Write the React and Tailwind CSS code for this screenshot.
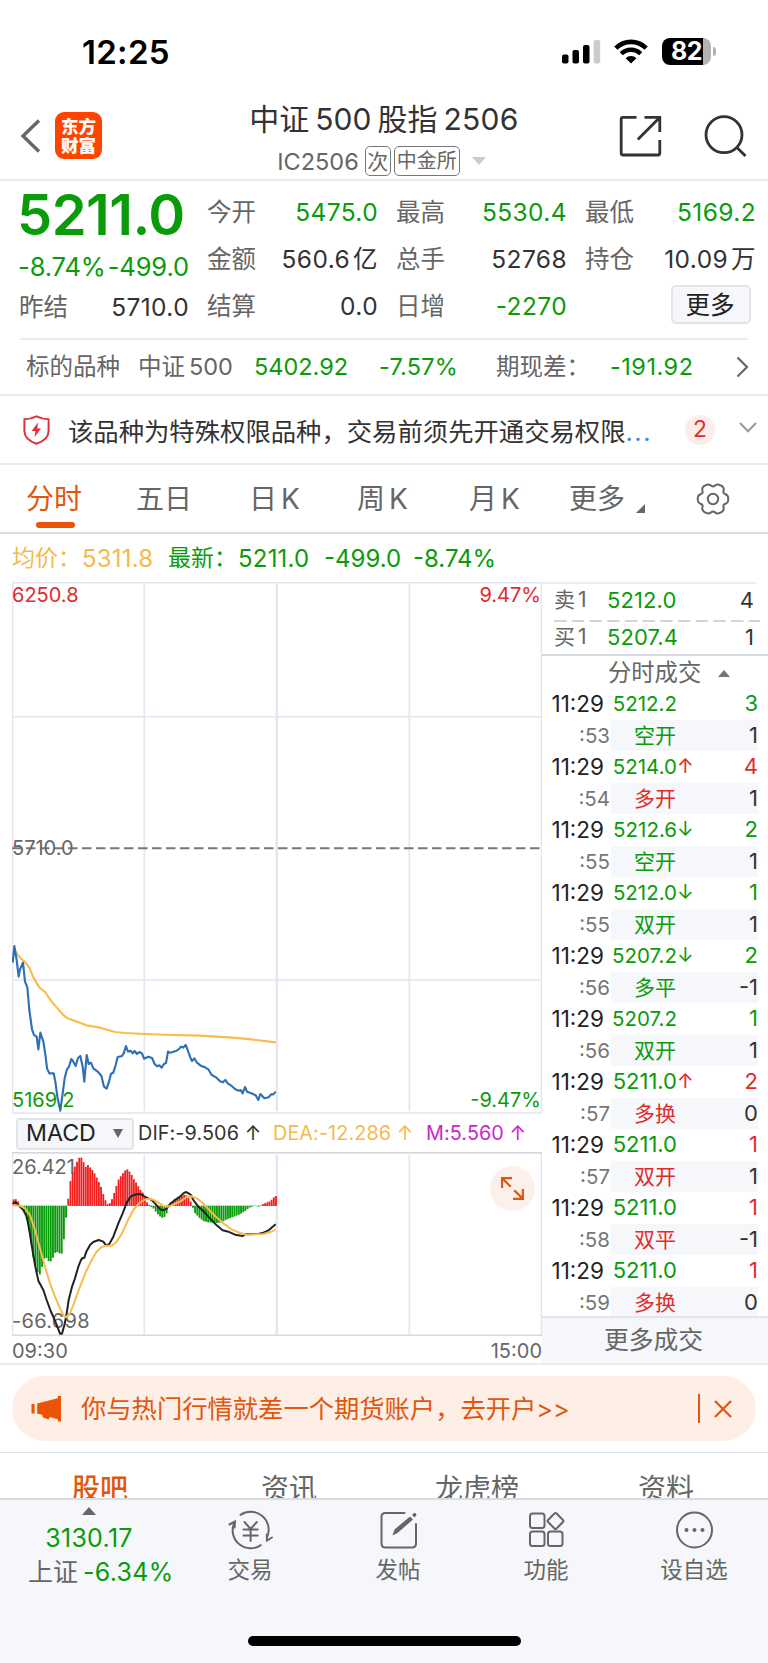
import React from 'react';

// Time & price line of the session, in chart units (3 per pixel)
const PRICE_POINTS =
  '38,188 43,138 50,180 56,230 60,208 69,188 75,245 82,262 88,330 96,388 102,405 110,410 115,448 121,398 130,425 137,470 141,505 148,520 161,520 166,545 172,590 181,632 188,580 194,535 201,508 207,500 214,477 220,485 227,498 234,474 241,468 248,500 253,545 260,465 266,492 273,488 280,505 292,514 304,527 312,560 320,566 327,545 333,521 340,518 347,495 353,471 366,468 372,458 378,438 384,455 392,452 398,460 404,453 411,462 418,456 426,460 432,476 445,470 456,474 464,492 471,499 478,496 485,503 492,492 498,489 504,455 511,458 530,452 537,447 543,440 549,443 557,435 563,450 570,470 576,483 583,475 590,487 602,497 615,502 625,508 635,525 648,532 660,544 668,547 676,540 684,551 694,557 706,568 716,572 722,570 728,580 735,561 741,575 754,580 767,586 775,600 781,582 793,595 806,592 813,583 820,583 827,575';
const AVERAGE_POINTS =
  '43,145 50,160 60,173 75,186 88,203 100,232 118,262 135,276 155,305 175,328 192,347 203,355 225,363 260,376 300,383 345,396 375,399 434,402 520,405 600,407 700,413 760,419 827,427';
const DIF_POINTS =
  '38,312 46,306 52,312 58,318 70,330 80,350 88,390 95,435 105,495 115,542 130,570 140,600 152,633 162,655 172,680 180,701 186,701 194,672 200,640 206,600 216,560 225,535 235,500 243,480 248,474 253,473 259,455 270,435 280,426 296,420 310,425 318,436 328,432 340,410 355,370 368,340 380,308 392,290 404,284 418,282 428,285 434,290 445,295 455,300 465,310 478,325 485,330 493,330 500,326 510,312 522,302 540,290 550,280 557,276 566,280 573,285 580,300 595,320 610,333 630,355 650,376 668,391 685,395 705,404 728,408 735,403 775,402 790,398 806,391 818,380 827,373';
const DEA_POINTS =
  '38,316 60,317 75,325 90,345 105,390 120,445 135,500 150,550 165,590 180,625 190,645 198,652 210,640 222,610 240,560 258,515 275,480 290,455 305,441 318,437 335,437 350,425 365,402 385,358 400,330 415,312 428,302 445,296 460,299 475,308 490,318 505,320 520,314 540,305 560,291 575,289 590,295 605,306 620,322 645,348 670,370 695,388 720,399 740,404 790,402 810,397 827,389';

// Outline of the MACD histogram, one bar is drawn per minute
const ZERO = 317;
const HISTOGRAM = [
  [38, 300], [45, 296], [52, 300], [58, 312], [62, 317], [70, 325], [78, 345], [85, 380], [92, 420], [98, 460],
  [104, 490], [111, 510], [118, 528], [122, 515], [127, 497], [132, 475], [140, 473], [148, 485], [155, 482],
  [162, 465], [168, 453], [175, 457], [185, 462], [190, 430], [195, 395], [199, 345], [203, 317], [208, 265],
  [214, 228], [220, 210], [230, 188], [238, 173], [248, 173], [255, 205], [262, 193], [275, 207], [285, 222],
  [294, 240], [304, 262], [311, 285], [318, 305], [324, 313], [332, 308], [340, 288], [348, 262], [355, 240],
  [365, 225], [375, 212], [382, 208], [392, 218], [400, 235], [410, 250], [420, 268], [430, 280], [437, 300],
  [443, 310], [450, 317], [462, 325], [470, 338], [480, 348], [488, 353], [497, 348], [505, 325], [512, 308],
  [525, 300], [540, 292], [555, 283], [563, 288], [570, 300], [575, 310], [578, 320], [585, 338], [598, 352],
  [610, 362], [625, 366], [650, 368], [665, 366], [680, 357], [700, 350], [715, 344], [735, 333], [748, 322],
  [765, 316], [778, 320], [785, 314], [800, 308], [812, 303], [820, 293], [832, 286],
];

const levelAt = (x) => {
  const i = HISTOGRAM.findIndex((p) => p[0] >= x);
  if (i <= 0) return HISTOGRAM[0][1];
  const [x0, y0] = HISTOGRAM[i - 1];
  const [x1, y1] = HISTOGRAM[i];
  return y0 + ((y1 - y0) * (x - x0)) / (x1 - x0);
};

const bars = Array.from({ length: 121 }, (_, i) => {
  const x = 38 + i * 6.56;
  return { x, y: levelAt(x + 3) };
});

const GREEN = 'text-[#0a9b0a]';
const RED = 'text-[#e12b2b]';

const trades = [
  { price: '5212.2', sec: '53', type: '空开', vol: 3, diff: 1, up: false },
  { price: '5214.0', arrow: '↑', sec: '54', type: '多开', vol: 4, diff: 1, up: true },
  { price: '5212.6', arrow: '↓', sec: '55', type: '空开', vol: 2, diff: 1, up: false },
  { price: '5212.0', arrow: '↓', sec: '55', type: '双开', vol: 1, diff: 1, up: false },
  { price: '5207.2', arrow: '↓', sec: '56', type: '多平', vol: 2, diff: -1, up: false },
  { price: '5207.2', sec: '56', type: '双开', vol: 1, diff: 1, up: false },
  { price: '5211.0', arrow: '↑', sec: '57', type: '多换', vol: 2, diff: 0, up: true },
  { price: '5211.0', sec: '57', type: '双开', vol: 1, diff: 1, up: true },
  { price: '5211.0', sec: '58', type: '双平', vol: 1, diff: -1, up: true },
  { price: '5211.0', sec: '59', type: '多换', vol: 1, diff: 0, up: true },
];

function StatusBar() {
  return (
    <div className="flex h-[84px] items-start justify-between pr-[52px] pl-[82px] text-black">
      <span className="mt-[36px] text-[33px] leading-8 font-semibold tracking-[0.3px]">12:25</span>
      <div className="mt-[38px] flex items-center">
        <svg width="39" height="25" viewBox="0 0 39 25">
          <rect x="0" y="15.5" width="6.5" height="9" rx="2" />
          <rect x="10.5" y="11" width="6.5" height="13.5" rx="2" />
          <rect x="21" y="6" width="6.5" height="18.5" rx="2" />
          <rect x="31.7" y="1" width="6.5" height="23.5" rx="2" fill="#cccccc" />
        </svg>
        <svg className="ml-[13px]" width="34" height="25" viewBox="0 0 34 25" fill="none" stroke="#000">
          <path d="M1.8 9.2 A21.5 21.5 0 0 1 32.2 9.2" strokeWidth="4.6" />
          <path d="M7.3 14.7 A13.8 13.8 0 0 1 26.7 14.7" strokeWidth="4.4" />
          <path d="M17 24.5 L11.6 19.2 A7.6 7.6 0 0 1 22.4 19.2 Z" fill="#000" stroke="none" />
        </svg>
        <div className="ml-[14px] flex h-[27px] w-[49px] items-center justify-center rounded-[8px] bg-linear-to-r from-black from-83% to-[#b3b3b3] to-83% text-[25px] leading-none font-bold tracking-[-0.6px] text-white">
          82
        </div>
        <div className="ml-[2px] h-[9px] w-[3px] rounded-r-full bg-[#b3b3b3]" />
      </div>
    </div>
  );
}

function Header() {
  return (
    <header className="flex h-[97px] items-start border-b-2 border-[#ececee] pl-[20px]">
      <svg className="mt-[35px]" width="21" height="34" viewBox="0 0 21 34" fill="none" stroke="#666" strokeWidth="3.4">
        <path d="M19 1.5 L3 17 L19 32.5" />
      </svg>
      <div className="mt-[28px] ml-[14px] flex size-[47px] flex-col items-center justify-center rounded-[9px] bg-[#ff4400] text-[17.5px] leading-[19px] font-black text-white">
        <span>东方</span>
        <span>财富</span>
      </div>
      <div className="ml-[128px] flex w-[308px] flex-col items-center">
        <h1 className="mt-[16px] flex gap-[6px] text-[30px] leading-[38px] whitespace-nowrap text-[#333]">
          <span>中证</span>
          <span>500</span>
          <span>股指</span>
          <span className="tracking-[0.3px]">2506</span>
        </h1>
        <div className="mt-[8px] flex items-center pr-[5px] text-[24px] leading-[29px] text-[#666]">
          <span className="text-[23.5px]">IC2506</span>
          <span className="ml-[6px] flex h-[30px] w-[26px] items-center justify-center rounded-[5px] border border-[#777] text-[21px]">次</span>
          <span className="ml-[3px] flex h-[30px] w-[66px] items-center justify-center rounded-[5px] border border-[#777] text-[20px]">中金所</span>
          <svg className="ml-[12px]" width="14" height="8" viewBox="0 0 14 8">
            <path d="M0 0 H14 L7 8 Z" fill="#cbcbcb" />
          </svg>
        </div>
      </div>
      <svg className="mt-[31px] ml-[81px]" width="43" height="43" viewBox="0 0 43 43" fill="none" stroke="#333" strokeWidth="2.8">
        <path d="M17.5 2.4 H4 Q2.2 2.4 2.2 4.2 V38 Q2.2 40 4.2 40 H39 Q40.8 40 40.8 38 V25" />
        <path d="M25.5 2.4 H40.8 V17 M40.2 3 L18.8 24.6" />
      </svg>
      <svg className="mt-[31px] ml-[42px]" width="43" height="43" viewBox="0 0 43 43" fill="none" stroke="#333" strokeWidth="2.8">
        <circle cx="20" cy="19.7" r="18" />
        <path d="M32.4 32 L41.5 41" />
      </svg>
    </header>
  );
}

function Stat({ label, value, unit, color = 'text-[#333]' }) {
  return (
    <div className="flex items-center justify-between whitespace-nowrap">
      <span className="text-[#666]">{label}</span>
      <span className={`flex gap-[3px] tracking-[0.4px] ${color}`}>
        {value}
        {unit && <span>{unit}</span>}
      </span>
    </div>
  );
}

function Quote() {
  return (
    <section className="flex h-[157px] pl-[19px] text-[24.5px] leading-[47px]">
      <div className="w-[170px]">
        <div className={`-ml-[2px] mt-[5px] h-[59px] text-[56px] leading-[59px] font-semibold tracking-[-0.5px] whitespace-nowrap ${GREEN}`}>5211.0</div>
        <div className={`-ml-[1px] flex h-[39px] justify-between text-[25.5px] leading-[43px] tracking-[-0.1px] whitespace-nowrap ${GREEN}`}>
          <span>-8.74%</span>
          <span>-499.0</span>
        </div>
        <Stat label="昨结" value="5710.0" />
      </div>
      <div className="mt-[8px] ml-[18px] w-[171px]">
        <Stat label="今开" value="5475.0" color={GREEN} />
        <Stat label="金额" value="560.6" unit="亿" />
        <Stat label="结算" value="0.0" />
      </div>
      <div className="mt-[8px] ml-[18px] w-[171px]">
        <Stat label="最高" value="5530.4" color={GREEN} />
        <Stat label="总手" value="52768" />
        <Stat label="日增" value="-2270" color={GREEN} />
      </div>
      <div className="mt-[8px] ml-[18px] w-[171px]">
        <Stat label="最低" value="5169.2" color={GREEN} />
        <Stat label="持仓" value="10.09" unit="万" />
        <button className="mt-[2px] ml-[86px] flex h-[39px] w-[80px] items-center justify-center rounded-[5px] border-2 border-[#e2e4e9] bg-[#f6f7fa] pt-[2px] pr-[2px] leading-none text-[#222]">
          更多
        </button>
      </div>
    </section>
  );
}

function Underlying() {
  return (
    <section className="border-b-2 border-[#ececee]">
      <div className="mr-[20px] ml-[20px] border-t-2 border-[#ececee]" />
      <div className="flex h-[54px] items-center pl-[26px] text-[23.5px] whitespace-nowrap text-[#666]">
        <span className="w-[112px]">标的品种</span>
        <span className="flex w-[116px] gap-[4px]">
          <span>中证</span>
          <span>500</span>
        </span>
        <span className={`w-[125px] ${GREEN}`}>5402.92</span>
        <span className={`w-[117px] tracking-[0.2px] ${GREEN}`}>-7.57%</span>
        <span className="w-[114px]">期现差：</span>
        <span className={`w-[126px] tracking-[0.5px] ${GREEN}`}>-191.92</span>
        <svg width="13" height="22" viewBox="0 0 13 22" fill="none" stroke="#666" strokeWidth="2.2">
          <path d="M1.5 1.5 L11 11 L1.5 20.5" />
        </svg>
      </div>
    </section>
  );
}

function Notice() {
  return (
    <section className="flex h-[69px] items-center border-b-2 border-[#ececee] pl-[23px]">
      <svg width="27" height="30" viewBox="0 0 27 30" fill="none" stroke="#e03038" strokeWidth="2">
        <path d="M13.5 1.3 Q19 4 25.6 4.2 V16 C25.6 22 20 26.5 13.5 28.7 C7 26.5 1.4 22 1.4 16 V4.2 Q8 4 13.5 1.3 Z" strokeLinejoin="round" />
        <path d="M15 7.5 L8.6 16 H12.3 L11.6 22 L18 13.4 H14.3 Z" fill="#e03038" stroke="none" />
      </svg>
      <div className="mt-[6px] ml-[18px] flex w-[604px] text-[25.35px] whitespace-nowrap text-[#333]">
        该品种为特殊权限品种，交易前须先开通交易权限
        <span className="tracking-[1.5px] text-[#3b86d8]">...</span>
      </div>
      <span className="ml-[13px] flex size-[30px] items-center justify-center rounded-full bg-[#fdecec] text-[23px] leading-none text-[#e12b2b]">2</span>
      <svg className="mt-[-5px] ml-[24px]" width="18" height="11" viewBox="0 0 18 11" fill="none" stroke="#999" strokeWidth="2">
        <path d="M1 1 L9 9.3 L17 1" />
      </svg>
    </section>
  );
}

function PeriodTabs() {
  return (
    <nav className="flex h-[69px] items-center border-b-2 border-[#dadce1] pl-[26px] text-[28px] whitespace-nowrap text-[#666]">
      <div className="relative w-[110px] text-[#e2560e]">
        分时
        <span className="absolute top-[44px] left-[10px] h-[6px] w-[39px] rounded-full bg-[#ea5404]" />
      </div>
      <span className="w-[113px]">五日</span>
      <span className="flex w-[108px] gap-[4px]">日<span>K</span></span>
      <span className="flex w-[112px] gap-[4px]">周<span>K</span></span>
      <span className="flex w-[100px] gap-[4px]">月<span>K</span></span>
      <span>更多</span>
      <svg className="mt-[20px] ml-[11px]" width="9" height="9" viewBox="0 0 9 9">
        <path d="M9 0 V9 H0 Z" fill="#666" />
      </svg>
      <svg className="ml-[51px]" width="34" height="34" viewBox="0 0 34 34" fill="none" stroke="#666" strokeWidth="2" strokeLinejoin="round">
        <path d="M17 4.6 C18.6 4.6 19.8 2.2 22 2.6 C24 3 27 4.8 27.6 6.4 C28.3 8.3 26.8 9.4 27.6 11 C28.4 12.4 31 12.2 31.8 14.2 C32.4 16 32.4 18 31.8 19.8 C31 21.8 28.4 21.6 27.6 23 C26.8 24.6 28.3 25.7 27.6 27.6 C27 29.2 24 31 22 31.4 C19.8 31.8 18.6 29.4 17 29.4 C15.4 29.4 14.2 31.8 12 31.4 C10 31 7 29.2 6.4 27.6 C5.7 25.7 7.2 24.6 6.4 23 C5.6 21.6 3 21.8 2.2 19.8 C1.6 18 1.6 16 2.2 14.2 C3 12.2 5.6 12.4 6.4 11 C7.2 9.4 5.7 8.3 6.4 6.4 C7 4.8 10 3 12 2.6 C14.2 2.2 15.4 4.6 17 4.6 Z" />
        <circle cx="17" cy="17" r="5.2" />
      </svg>
    </nav>
  );
}

function PriceChart() {
  return (
    <div className="relative h-[532px] text-[20px] leading-none">
      <svg width="530" height="532" viewBox="0 0 530 532" fill="none">
        <g stroke="#e4e5ef" strokeWidth="1.6">
          <path d="M0 .8 H530 M.6 0 V531 M529.4 0 V531 M0 531 H530" />
          <path d="M132.3 2 V529 M397.3 2 V529 M0 134.7 H530 M0 398 H530" />
          <path d="M264.8 2 V529" strokeWidth="2.4" />
        </g>
        <path d="M0 266.3 H528" stroke="#777" strokeWidth="2" strokeDasharray="9.5 4.5" />
        <g transform="translate(-12 318) scale(.33333)" strokeLinejoin="round">
          <polyline points={AVERAGE_POINTS} stroke="#f8bc4e" strokeWidth="6.4" />
          <polyline points={PRICE_POINTS} stroke="#2f6fb7" strokeWidth="6.4" />
        </g>
      </svg>
      <span className={`absolute top-[3px] left-0 ${RED}`}>6250.8</span>
      <span className={`absolute top-[3px] right-[1px] ${RED}`}>9.47%</span>
      <span className="absolute top-[256px] left-0 text-[#666]">5710.0</span>
      <span className={`absolute bottom-[4px] left-0 ${GREEN}`}>5169.2</span>
      <span className={`absolute right-[1px] bottom-[4px] ${GREEN}`}>-9.47%</span>
    </div>
  );
}

function MacdBar() {
  return (
    <div className="flex h-[38px] items-center pt-px pl-[4px] text-[19.8px] whitespace-nowrap text-[#333]">
      <button className="flex h-[32px] w-[118px] items-center rounded-[4px] border-2 border-[#e2e4e9] bg-[#f6f7fa] pl-[8px] text-[23.2px] text-[#222]">
        MACD
        <svg className="ml-[17px]" width="10" height="9" viewBox="0 0 10 9">
          <path d="M0 0 H10 L5 9 Z" fill="#666" />
        </svg>
      </button>
      <span className="ml-[4px] w-[135px] tracking-[0.1px]">DIF:-9.506 ↑</span>
      <span className="w-[153px] tracking-[0.1px] text-[#f5b94d]">DEA:-12.286 ↑</span>
      <span className="tracking-[0.1px] text-[#c928c9]">M:5.560 ↑</span>
    </div>
  );
}

function MacdChart() {
  return (
    <div className="relative h-[184px] text-[20px] leading-none text-[#666]">
      <svg width="530" height="184" viewBox="0 0 530 184" fill="none">
        <g stroke="#e4e5ef" strokeWidth="1.6">
          <path d="M.6 0 V183 M529.4 0 V183 M132.3 3 V183 M397.3 3 V183" />
          <path d="M264.8 3 V183" strokeWidth="2.4" />
          <path d="M0 .9 H530 M0 183.2 H530" stroke="#d7d9e2" />
        </g>
        <g transform="translate(-12 -52) scale(.33333)">
          {bars.map((bar) => (
            <rect
              key={bar.x}
              x={bar.x}
              y={Math.min(bar.y, ZERO)}
              width="5.6"
              height={Math.abs(bar.y - ZERO) + 1}
              fill={bar.y < ZERO ? '#f21f1f' : '#0a9b0a'}
            />
          ))}
        </g>
      </svg>
      <span className="absolute top-[5px] left-0">26.421</span>
      <span className="absolute bottom-[5px] left-0 tracking-[0.3px]">-66.698</span>
      <svg className="absolute inset-0" width="530" height="184" viewBox="0 0 530 184" fill="none">
        <g transform="translate(-12 -52) scale(.33333)" strokeWidth="6" strokeLinejoin="round">
          <polyline points={DIF_POINTS} stroke="#222" />
          <polyline points={DEA_POINTS} stroke="#f8bc4e" />
        </g>
      </svg>
      <div className="absolute top-[14px] right-[7px] flex size-[45px] items-center justify-center rounded-full bg-[#fdf0ea]">
        <svg width="23" height="23" viewBox="0 0 23 23" fill="none" stroke="#e2560e" strokeWidth="2.2">
          <path d="M1.1 11 V1.2 H11 M1.6 1.6 L9.8 9.8" />
          <path d="M21.9 12 V21.8 H12 M21.4 21.4 L13.2 13.2" />
        </svg>
      </div>
    </div>
  );
}

function OrderRow({ label, price, volume }) {
  return (
    <div className="flex h-[36px] items-center text-[22px] whitespace-nowrap">
      <span className="flex w-[53px] gap-[3px] text-[21px] text-[#666]">
        {label}<span className="leading-[31px]">1</span>
      </span>
      <span className={`tracking-[0.1px] ${GREEN}`}>{price}</span>
      <span className="ml-auto pr-[14px] text-[#333]">{volume}</span>
    </div>
  );
}

function TradePanel() {
  return (
    <aside className="flex w-[226px] flex-col">
      <div className="h-[74px] border-b-2 border-[#d7d9e2] pl-[12px]">
        <div className="-ml-[12px] mr-[12px] border-t-2 border-[#ececf1]" />
        <div className="-mt-[2px]">
          <OrderRow label="卖" price="5212.0" volume={4} />
        </div>
        <svg className="mt-[2px]" width="206" height="2" viewBox="0 0 206 2">
          <path d="M0 1 H206" stroke="#d3d5dc" strokeWidth="2" strokeDasharray="12.5 5.2" />
        </svg>
        <div className="-mt-[3px]">
          <OrderRow label="买" price="5207.4" volume={1} />
        </div>
      </div>
      <div className="flex h-[32px] items-center pt-[2px] pl-[66px] text-[23.3px] whitespace-nowrap text-[#666]">
        分时成交
        <svg className="ml-[17px]" width="12" height="7" viewBox="0 0 12 7">
          <path d="M0 7 H12 L6 0 Z" fill="#777" />
        </svg>
      </div>
      {trades.map((trade, i) => (
        <div key={i} className="h-[63px] pr-[10px] pl-[8px] text-[22px] leading-[31px]">
          <div className="flex h-[31.5px]">
            <span className="w-[54px] text-right text-[22.5px] text-[#222]">11:29</span>
            <span className={`w-[73px] text-right ${trade.price === '5211.0' ? 'text-[22px]' : 'text-[20.5px]'} ${GREEN}`}>{trade.price}</span>
            <span className={`text-[20px] ${trade.up ? RED : GREEN}`}>{trade.arrow}</span>
            <span className={`ml-auto ${trade.up ? RED : GREEN}`}>{trade.vol}</span>
          </div>
          <div className="flex h-[31.5px]">
            <span className="w-[61px] pr-[1px] text-right text-[20.5px] text-[#777]">:{trade.sec}</span>
            <div className="flex grow justify-between bg-[#f5f7fa] pl-[23px]">
              <span className={`text-[21px] ${trade.up ? RED : GREEN}`}>{trade.type}</span>
              <span className="text-[#333]">{trade.diff}</span>
            </div>
          </div>
        </div>
      ))}
      <button className="-mt-[2px] flex grow items-center justify-center border-t-2 border-[#e4e5ea] bg-[#f5f7fa] pr-[3px] text-[24.8px] leading-none text-[#666]">
        更多成交
      </button>
    </aside>
  );
}

function Market() {
  return (
    <section className="border-b-2 border-[#ececee]">
      <div className="flex h-[48px] items-center pt-px pl-[12px] text-[24px] whitespace-nowrap">
        <span className="w-[70px] text-[23px] text-[#f5b94d]">均价：</span>
        <span className="w-[86px] tracking-[0.2px] text-[#f5b94d]">5311.8</span>
        <span className={`w-[70px] text-[23px] ${GREEN}`}>最新：</span>
        <span className={`w-[86px] tracking-[0.2px] ${GREEN}`}>5211.0</span>
        <span className={`w-[89px] ${GREEN}`}>-499.0</span>
        <span className={GREEN}>-8.74%</span>
      </div>
      <div className="flex">
        <div className="ml-[12px] w-[530px]">
          <PriceChart />
          <MacdBar />
          <MacdChart />
          <div className="flex h-[27px] items-center justify-between pt-[3px] text-[20px] text-[#666]">
            <span>09:30</span>
            <span>15:00</span>
          </div>
        </div>
        <TradePanel />
      </div>
    </section>
  );
}

function Promo() {
  return (
    <div className="border-b border-[#dfe0e8] px-[12px] pt-[11px] pb-[11px]">
      <div className="flex h-[65px] items-center rounded-full bg-[#fdeee6] pl-[19px] text-[#e2560e]">
        <svg width="31" height="27" viewBox="0 0 31 27" fill="#ea5404">
          <path d="M.5 9 H3.6 V18.5 H.5 Z M6.2 8.6 L26.8 3.2 V1 H30 V26.5 H26.8 V24.2 L19 22 L17.5 24.5 L12 22.6 L11.2 19.8 L6.2 18.8 Z" />
        </svg>
        <span className="ml-[19px] text-[25.3px] whitespace-nowrap">你与热门行情就差一个期货账户，去开户&gt;&gt;</span>
        <span className="ml-auto h-[29px] w-[2px] bg-[#e2560e]" />
        <svg className="mr-[24px] ml-[14px]" width="18" height="18" viewBox="0 0 18 18" stroke="#e2560e" strokeWidth="2.2">
          <path d="M1 1 L17 17 M17 1 L1 17" />
        </svg>
      </div>
    </div>
  );
}

function InfoTabs() {
  return (
    <nav className="flex h-[45px] items-start overflow-hidden pt-[16px] text-[28px] leading-[40px] whitespace-nowrap text-[#666]">
      <span className="ml-[72px] w-[189px] font-medium text-[#e2560e]">股吧</span>
      <span className="w-[174px]">资讯</span>
      <span className="w-[203px]">龙虎榜</span>
      <span>资料</span>
    </nav>
  );
}

const actions = [
  {
    label: '交易',
    icon: (
      <>
        <path d="M12.5 4.8 A18 18 0 0 1 39.3 26.5" />
        <path d="M32.8 35.2 A18 18 0 0 1 6 13.5" />
        <path d="M1.5 14.5 L7 11.5 L6.6 17.5 M44 27.5 L39 30.5 L38.8 24.5" />
        <path d="M16.5 12 L22.6 19 L28.8 12 M22.6 19 V31 M15.5 19.4 H29.7 M15.5 25.4 H29.7" />
      </>
    ),
  },
  {
    label: '发帖',
    icon: (
      <>
        <path d="M28.5 3 H9.5 Q5.5 3 5.5 7 V33.5 Q5.5 37.5 9.5 37.5 H36 Q40 37.5 40 33.5 V14" />
        <path d="M16.5 25.5 L18.5 19.5 L34 6.5 L37 9.5 L21.5 23 Z M36 5 L38 3 Q40 2.5 40.5 5 L38.6 7.5 Z" fill="#666" stroke="none" />
      </>
    ),
  },
  {
    label: '功能',
    icon: (
      <>
        <rect x="6" y="3.5" width="14.5" height="14.5" rx="2.5" />
        <rect x="6" y="21.5" width="14.5" height="14.5" rx="2.5" />
        <rect x="24" y="21.5" width="14.5" height="14.5" rx="2.5" />
        <rect x="25.5" y="5" width="12" height="12" rx="1.5" transform="rotate(45 31.5 11)" />
      </>
    ),
  },
  {
    label: '设自选',
    icon: (
      <>
        <circle cx="22.5" cy="20" r="17.5" />
        <g fill="#666" stroke="none">
          <circle cx="14.5" cy="20" r="2" />
          <circle cx="22.5" cy="20" r="2" />
          <circle cx="30.5" cy="20" r="2" />
        </g>
      </>
    ),
  },
];

function BottomBar() {
  return (
    <footer className="flex h-[165px] flex-col border-t-2 border-[#dadce1] bg-[#f6f7fa]">
      <div className="flex h-[136px] pl-[28px] text-[#666]">
        <div className="flex w-[148px] flex-col items-center whitespace-nowrap">
          <svg className="mt-[7px] mr-[26px]" width="14" height="8" viewBox="0 0 14 8">
            <path d="M0 8 H14 L7 0 Z" fill="#666" />
          </svg>
          <span className={`mt-[7px] mr-[26px] text-[25px] leading-[32px] tracking-[0.3px] ${GREEN}`}>3130.17</span>
          <span className="mt-[1px] flex gap-[5px] self-start text-[25px] leading-[34px]">
            上证<span className={`tracking-[0.3px] ${GREEN}`}>-6.34%</span>
          </span>
        </div>
        {actions.map((action) => (
          <div key={action.label} className="flex w-[148px] flex-col items-center text-[22.5px] leading-[30px]">
            <svg className="mt-[10px] mb-[5px]" width="45" height="40" viewBox="0 0 45 40" fill="none" stroke="#666" strokeWidth="2" strokeLinecap="round">
              {action.icon}
            </svg>
            {action.label}
          </div>
        ))}
      </div>
      <div className="ml-[248px] h-[10px] w-[273px] rounded-full bg-black" />
    </footer>
  );
}

function App() {
  return (
    <div className="h-[1663px] w-[768px] overflow-hidden bg-white font-['Inter','Noto_Sans_CJK_SC',sans-serif]">
      <StatusBar />
      <Header />
      <Quote />
      <Underlying />
      <Notice />
      <PeriodTabs />
      <Market />
      <Promo />
      <InfoTabs />
      <BottomBar />
    </div>
  );
}

export default App;
